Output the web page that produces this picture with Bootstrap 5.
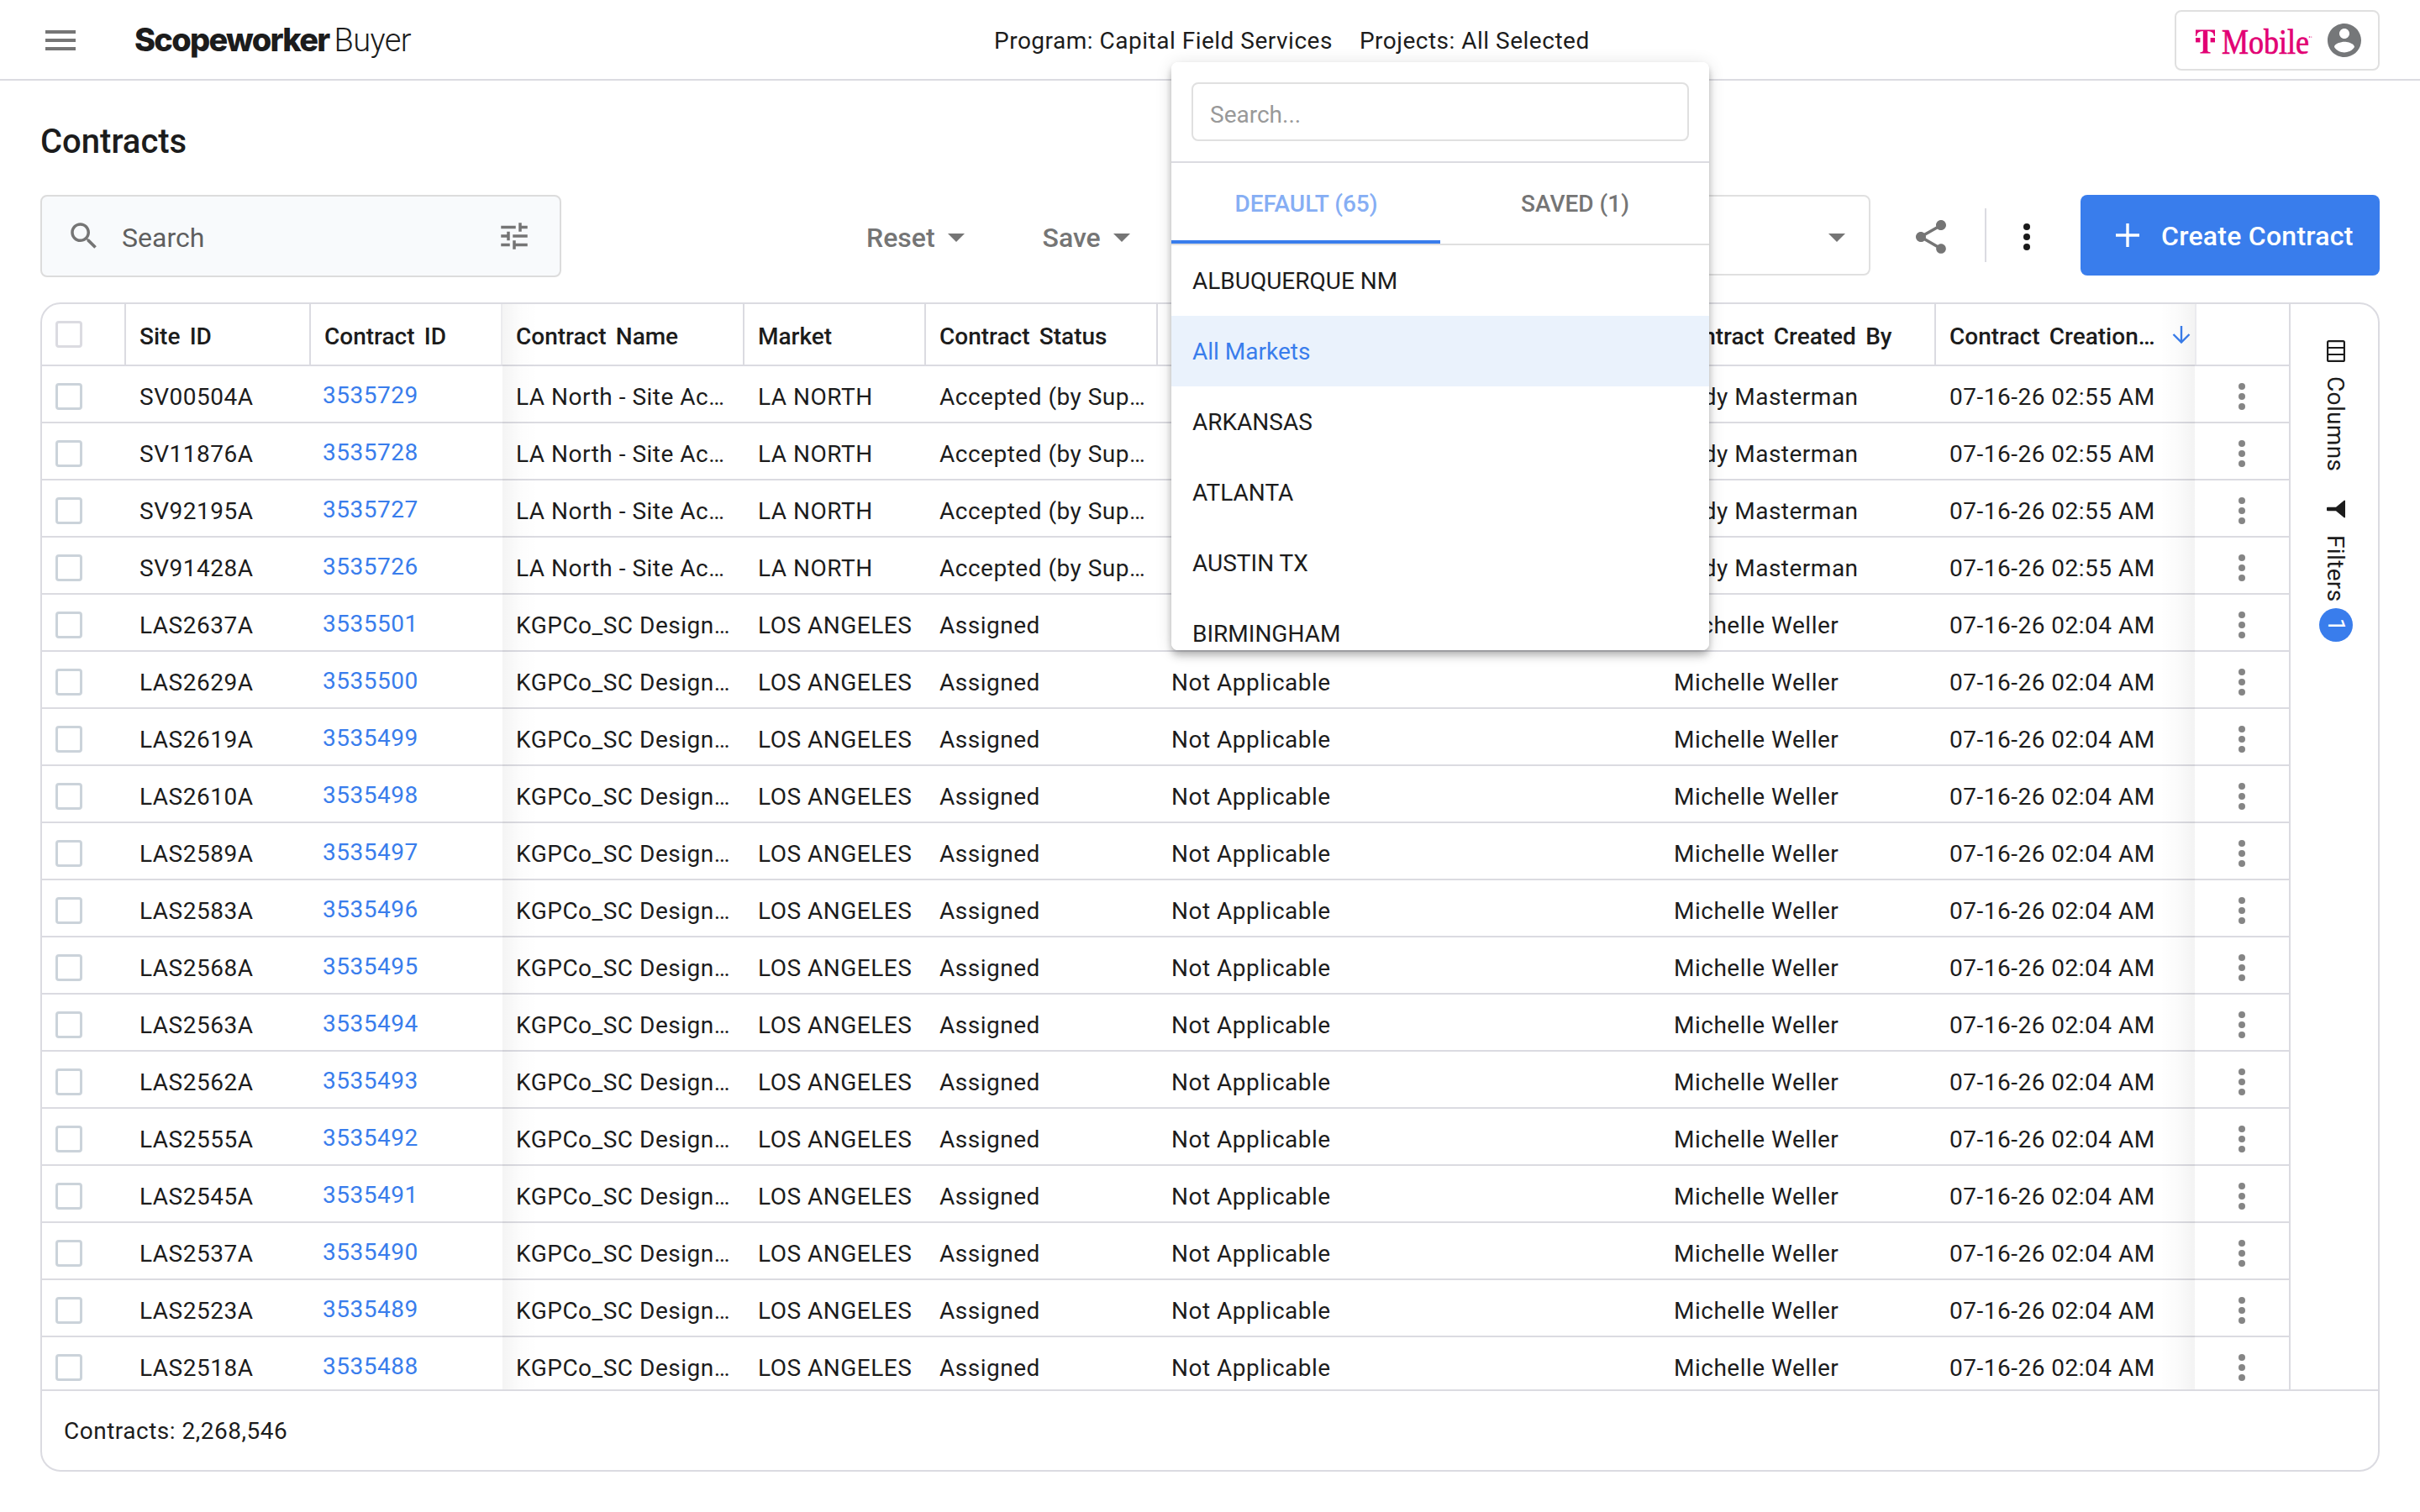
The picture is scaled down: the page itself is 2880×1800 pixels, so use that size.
<!DOCTYPE html>
<html lang="en">
<head>
<meta charset="utf-8">
<title>Contracts</title>
<link href="https://cdn.jsdelivr.net/npm/bootstrap@5.3.0/dist/css/bootstrap.min.css" rel="stylesheet">
<style>
:root { --line:#dbdbe1; --soft:#e0e0e0; --blue:#397dec; --ink:#1c1c1c; --muted:#757575; }
body { font-family:Roboto,"Liberation Sans",sans-serif; font-size:28px; line-height:36px; color:var(--ink); background:#fff; width:2880px; height:1800px; overflow:hidden; }
svg { display:block; flex:none; }
.topbar { height:96px; border-bottom:2px solid var(--line); padding-top:2px; }
.topbar .side { width:1183px; }
.brand { height:46px; margin:0 0 3px 64px; line-height:46px; font-size:38px; }
.brand b { font-family:Inter,"Liberation Sans",sans-serif; font-weight:800; letter-spacing:-1.75px; }
.brand span { font-weight:300; letter-spacing:-.6px; margin-left:6px; }
.scope-text { letter-spacing:.5px; white-space:nowrap; padding-top:2px; }
.scope-next { margin-left:32px; }
.account { width:244px; height:72px; border:2px solid var(--soft); border-radius:8px; padding:0 16px 0 22px; }
.page-title { height:136px; padding-top:10px; font-size:40px; font-weight:500; line-height:48px; }
.toolbar { height:98px; }
.finder { width:620px; height:98px; background:#f8fafc; border:2px solid #dcdcdc; border-radius:8px; padding:0 33px 0 29px; font-size:32px; color:#5f5f5f; }
.finder span { margin-left:24px; padding-top:3px; }
.text-btn { height:96px; padding-top:6px; gap:15px; font-size:32px; font-weight:500; color:var(--muted); }
.reset-btn { margin-left:363px; }
.save-btn { margin-left:93px; }
.view-select { width:806px; height:96px; border:2px solid var(--soft); border-radius:8px; padding:6px 28px 0 0; }
.tool-icon { height:96px; padding-top:4px; }
.rule { width:2px; height:64px; margin:16px 0 0 40px; background:var(--line); }
.create { width:356px; height:96px; margin-left:40px; border:0; border-radius:8px; background:var(--blue); color:#fff; font-size:32px; font-weight:500; letter-spacing:.25px; padding:0 0 0 32px; gap:16px; white-space:nowrap; }
.create .label { padding-top:2px; }
.grid-card { height:1392px; margin-top:30px; border:2px solid var(--line); border-radius:24px; overflow:hidden; }
.grid-main { height:1292px; }
.grid-table { width:2674px; overflow:hidden; }
.g-row { display:grid; grid-template-columns:100px 220px 228px 288px 216px 276px 598px 328px 310px 110px; height:68px; border-bottom:2px solid var(--line); letter-spacing:.5px; }
.g-row > div { padding:8px 0 0 16px; display:flex; align-items:center; white-space:nowrap; }
.g-row > .g-check { padding-top:6px; }
.g-row > .g-link { padding:4px 0 0 14px; color:var(--blue); }
.g-row > .g-more { padding:6px 0 0 30px; }
.g-head { height:74px; font-weight:500; letter-spacing:0; word-spacing:4.3px; }
.g-head > div { padding-top:5px; border-right:2px solid var(--line); }
.g-head > .g-check { padding-top:0; }
.g-head > .faint { border-right-color:#ebebee; }
.g-head svg { margin:0 0 6px 20px; }
.box { width:32px; height:32px; border:3px solid #cbd3da; border-radius:4px; background:#fff; }
.g-head .box { border-color:var(--line); }
.pin-left, .pin-right { position:absolute; top:0; bottom:0; pointer-events:none; }
.pin-left { left:548px; width:42px; background:linear-gradient(90deg,rgba(0,0,0,.042),rgba(0,0,0,.012) 50%,transparent); }
.pin-right { left:2520px; width:42px; background:linear-gradient(270deg,rgba(0,0,0,.048),rgba(0,0,0,.014) 50%,transparent); }
.rail { flex:1 1 0; border-left:2px solid var(--line); padding:43px 0 0 4px; letter-spacing:.35px; }
.rail .sideways { writing-mode:vertical-rl; line-height:36px; }
.rail > .sideways { margin:17px 2px 0 0; }
.rail svg + .sideways ~ svg { margin-top:34px; }
.rail svg ~ svg + .sideways { margin-top:20px; }
.count { width:40px; height:40px; margin-top:7px; border-radius:50%; background:var(--blue); color:#fff; letter-spacing:0; }
.grid-foot { height:96px; border-top:2px solid var(--line); padding:2px 0 0 26px; letter-spacing:.5px; }
.market-menu, .menu-shadow { position:absolute; left:1394px; top:74px; width:640px; height:700px; border-radius:8px; }
.market-menu { background:#fff; overflow:hidden; }
.menu-shadow { box-shadow:0 4px 8px -2px rgba(0,0,0,.2),0 8px 10px 0 rgba(0,0,0,.14),0 2px 20px 0 rgba(0,0,0,.12); }
.menu-find { height:120px; padding:24px; border-bottom:2px solid var(--line); }
.menu-find input { height:70px; border:2px solid var(--soft); border-radius:8px; padding:6px 0 0 20px; font-size:28px; }
.menu-find input::placeholder { color:#999; opacity:1; }
.menu-tabs { height:98px; border-bottom:2px solid var(--soft); font-weight:500; color:var(--muted); }
.menu-tabs div { border-bottom:4px solid transparent; padding:6px 0 0 1px; }
.menu-tabs .on { color:#86aef4; border-bottom-color:var(--blue); }
.menu-item { height:84px; padding:2px 24px 0 25px; }
.menu-item.on { background:#eaf2fc; color:var(--blue); }
</style>
</head>
<body class="position-relative">
<svg width="0" height="0" class="position-absolute">
  <symbol id="more" viewBox="0 0 24 24"><circle cx="12" cy="6" r="2"/><circle cx="12" cy="12" r="2"/><circle cx="12" cy="18" r="2"/></symbol>
  <symbol id="caret" viewBox="0 0 20 10"><path d="M0 0h20L10 10z"/></symbol>
</svg>

<header class="topbar d-flex align-items-center">
  <div class="side d-flex align-items-center">
    <svg class="ms-5" width="48" height="48" viewBox="0 0 24 24" fill="#757575"><path d="M3 18h18v-2H3v2zm0-5h18v-2H3v2zm0-7v2h18V6H3z"/></svg>
    <div class="brand d-flex align-items-baseline"><b>Scopeworker</b><span>Buyer</span></div>
  </div>
  <div class="scope-text">Program: Capital Field Services</div>
  <div class="scope-text scope-next">Projects: All Selected</div>
  <div class="account d-flex align-items-center justify-content-between ms-auto me-5">
    <svg width="142" height="52" viewBox="0 -4 142 52" fill="#e20074">
      <rect x="1" y="19" width="5.400" height="5.400"/><rect x="18.600" y="19" width="5.400" height="5.400"/>
      <path d="M1 10h23v7.500h-1.200C22.400 13.500 20 11.800 15.200 11.600V34.600q0 2.200 3.400 2.200V38H6.400v-1.200q3.400 0 3.400-2.200V11.600C5 11.800 2.600 13.500 2.200 17.500H1z" transform="translate(0 -.5)"/>
      <text x="32" y="38" font-family="Liberation Serif,serif" font-size="42" stroke="#e20074" stroke-width=".7" textLength="104" lengthAdjust="spacingAndGlyphs">Mobile</text>
      <circle cx="136.500" cy="18" r=".8"/><circle cx="138.800" cy="18" r=".6"/>
    </svg>
    <svg width="48" height="48" viewBox="0 0 24 24" fill="#757779"><path d="M12 2C6.480 2 2 6.480 2 12s4.480 10 10 10 10-4.480 10-10S17.520 2 12 2zm0 3c1.660 0 3 1.340 3 3s-1.340 3-3 3-3-1.340-3-3 1.340-3 3-3zm0 14.200c-2.500 0-4.710-1.280-6-3.220.03-1.990 4-3.080 6-3.080 1.990 0 5.970 1.090 6 3.080-1.290 1.940-3.500 3.220-6 3.220z"/></svg>
  </div>
</header>

<main class="px-5">
  <h1 class="page-title d-flex align-items-center m-0">Contracts</h1>

  <div class="toolbar d-flex align-items-start">
    <div class="finder d-flex align-items-center">
      <svg width="42" height="42" viewBox="0 0 24 24" fill="#757575"><path d="M15.500 14h-.79l-.28-.27C15.410 12.590 16 11.110 16 9.500 16 5.910 13.090 3 9.500 3S3 5.910 3 9.500 5.910 16 9.500 16c1.610 0 3.090-.59 4.230-1.570l.27.280v.790l5 4.990L20.490 19l-4.990-5zm-6 0C7.010 14 5 11.990 5 9.500S7.010 5 9.500 5 14 7.010 14 9.500 11.990 14 9.500 14z"/></svg>
      <span>Search</span>
      <svg class="ms-auto" width="42" height="42" viewBox="0 0 24 24" fill="#757575"><path d="M3 17v2h6v-2H3zM3 5v2h10V5H3zm10 16v-2h8v-2h-8v-2h-2v6h2zM7 9v2H3v2h4v2h2V9H7zm14 4v-2H11v2h10zm-6-4h2V7h4V5h-4V3h-2v6z"/></svg>
    </div>
    <div class="text-btn reset-btn d-flex align-items-center">Reset<svg width="20" height="10" fill="#757575"><use href="#caret"/></svg></div>
    <div class="text-btn save-btn d-flex align-items-center">Save<svg width="20" height="10" fill="#757575"><use href="#caret"/></svg></div>
    <div class="view-select d-flex align-items-center justify-content-end ms-auto"><svg width="20" height="10" fill="#757575"><use href="#caret"/></svg></div>
    <div class="tool-icon d-flex align-items-center ms-5"><svg width="48" height="48" viewBox="0 0 24 24" fill="#757575"><path d="M18 16.080c-.76 0-1.440.3-1.960.77L8.910 12.700c.05-.23.090-.46.090-.7s-.04-.47-.09-.7l7.050-4.110c.54.5 1.250.81 2.040.81 1.660 0 3-1.340 3-3s-1.340-3-3-3-3 1.340-3 3c0 .24.040.47.090.7L8.040 9.810C7.500 9.310 6.790 9 6 9c-1.660 0-3 1.340-3 3s1.340 3 3 3c.79 0 1.500-.31 2.040-.81l7.120 4.160c-.05.210-.08.430-.08.650 0 1.610 1.310 2.920 2.920 2.920s2.920-1.310 2.920-2.920-1.310-2.920-2.920-2.920z"/></svg></div>
    <div class="rule"></div>
    <div class="tool-icon d-flex align-items-center ms-4"><svg width="48" height="48" fill="#1a1a1a"><use href="#more"/></svg></div>
    <button class="create btn d-flex align-items-center"><svg width="48" height="48" viewBox="0 0 48 48" stroke="#fff" stroke-width="3.400"><path d="M10 24h28M24 10v28"/></svg><span class="label">Create Contract</span></button>
  </div>

  <section class="grid-card">
    <div class="grid-main d-flex">
      <div class="grid-table position-relative flex-shrink-0" id="grid">
        <div class="g-row g-head">
          <div class="g-check"><span class="box"></span></div><div>Site ID</div><div class="faint">Contract ID</div><div>Contract Name</div><div>Market</div><div>Contract Status</div><div></div><div>Contract Created By</div>
          <div class="faint">Contract Creation…<svg width="22" height="22" viewBox="0 0 22 22" fill="none" stroke="#397dec" stroke-width="2.400"><path d="M11 1v19M1.500 11l9.500 9.500 9.500-9.500"/></svg></div><div class="border-0"></div>
        </div>
      </div>
      <aside class="rail d-flex flex-column align-items-center">
        <svg width="22" height="26" viewBox="0 0 22 26" fill="none" stroke="#1c1c1c" stroke-width="2.200"><rect x="1.100" y="1.100" width="19.800" height="23.800" rx="1.500"/><path d="M1 9h20M1 17h20"/></svg>
        <span class="sideways">Columns</span>
        <svg width="22" height="22" viewBox="0 0 22 22" fill="#1c1c1c"><path d="M21 .5q1 0 1 1v19q0 1-1 1L11 13.200H1q-1 0-1-1V9.800q0-1 1-1h10z"/></svg>
        <span class="sideways">Filters</span>
        <span class="count d-flex align-items-center justify-content-center"><span class="sideways">1</span></span>
      </aside>
    </div>
    <footer class="grid-foot d-flex align-items-center">Contracts: 2,268,546</footer>
  </section>
</main>

<div class="menu-shadow"></div>
<div class="market-menu">
  <div class="menu-find"><input class="form-control" placeholder="Search..."></div>
  <div class="menu-tabs d-flex">
    <div class="on w-50 d-flex align-items-center justify-content-center">DEFAULT (65)</div>
    <div class="w-50 d-flex align-items-center justify-content-center">SAVED (1)</div>
  </div>
  <div class="menu-item d-flex align-items-center">ALBUQUERQUE NM</div>
  <div class="menu-item d-flex align-items-center on">All Markets</div>
  <div class="menu-item d-flex align-items-center">ARKANSAS</div>
  <div class="menu-item d-flex align-items-center">ATLANTA</div>
  <div class="menu-item d-flex align-items-center">AUSTIN TX</div>
  <div class="menu-item d-flex align-items-center">BIRMINGHAM</div>
</div>

<script>
const north = ["LA North - Site Ac…", "LA NORTH", "Accepted (by Sup…", "Andy Masterman", "07-16-26 02:55 AM"];
const angeles = ["KGPCo_SC Design…", "LOS ANGELES", "Assigned", "Michelle Weller", "07-16-26 02:04 AM"];
const rows = [
  ["SV00504A", 3535729, north], ["SV11876A", 3535728, north], ["SV92195A", 3535727, north], ["SV91428A", 3535726, north],
  ...["LAS2637A","LAS2629A","LAS2619A","LAS2610A","LAS2589A","LAS2583A","LAS2568A","LAS2563A","LAS2562A","LAS2555A","LAS2545A","LAS2537A","LAS2523A","LAS2518A"]
    .map((site, i) => [site, 3535501 - i, angeles])
];
document.getElementById("grid").insertAdjacentHTML("beforeend", rows.map(([site, id, d], i) => `
  <div class="g-row"><div class="g-check"><span class="box"></span></div><div>${site}</div><div class="g-link">${id}</div><div>${d[0]}</div><div>${d[1]}</div><div>${d[2]}</div><div>${i > 4 ? "Not Applicable" : ""}</div><div>${d[3]}</div><div>${d[4]}</div><div class="g-more"><svg width="48" height="48" fill="#858585"><use href="#more"/></svg></div></div>`).join("")
  + '<div class="pin-left"></div><div class="pin-right"></div>');
</script>
<script src="https://cdn.jsdelivr.net/npm/bootstrap@5.3.0/dist/js/bootstrap.bundle.min.js"></script>
</body>
</html>
